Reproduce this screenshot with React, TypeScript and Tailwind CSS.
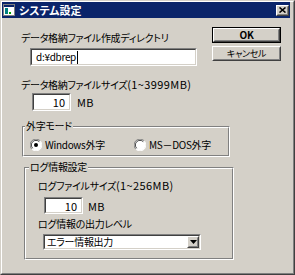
import React from "react";

const F = "[font-family:'Noto_Sans_CJK_JP',sans-serif] [font-feature-settings:'palt']";

function Sunken({ className, children }: { className?: string; children?: React.ReactNode }) {
  return (
    <div className={"border border-t-[#808080] border-l-[#808080] border-r-white border-b-white " + (className ?? "")}>
      <div className="h-full w-full border border-t-[#404040] border-l-[#404040] border-r-[#d4d0c8] border-b-[#d4d0c8] bg-white flex items-center">
        {children}
      </div>
    </div>
  );
}

function Raised({ className, children }: { className?: string; children?: React.ReactNode }) {
  return (
    <div className={"border border-t-white border-l-white border-r-[#404040] border-b-[#404040] " + (className ?? "")}>
      <div className="h-full w-full border border-t-[#d4d0c8] border-l-[#d4d0c8] border-r-[#808080] border-b-[#808080] flex items-center justify-center">
        {children}
      </div>
    </div>
  );
}

function Etched({ className, children }: { className?: string; children?: React.ReactNode }) {
  return (
    <div className={"relative border border-t-[#808080] border-l-[#808080] border-r-white border-b-white " + (className ?? "")}>
      <div className="h-full w-full border border-t-white border-l-white border-r-[#808080] border-b-[#808080]">
        {children}
      </div>
    </div>
  );
}

function Radio({ checked }: { checked?: boolean }) {
  return (
    <svg width="12" height="12" viewBox="0 0 12 12" className="shrink-0">
      <circle cx="6" cy="6" r="5.5" fill="white" />
      <path d="M10.2 1.8 A5.5 5.5 0 0 0 1.8 10.2" fill="none" stroke="#808080" strokeWidth="1" />
      <path d="M9.3 2.7 A4.3 4.3 0 0 0 2.7 9.3" fill="none" stroke="#404040" strokeWidth="1" />
      <path d="M1.8 10.2 A5.5 5.5 0 0 0 10.2 1.8" fill="none" stroke="#ffffff" strokeWidth="1" />
      {checked && <circle cx="6" cy="6" r="2" fill="black" />}
    </svg>
  );
}

export default function App() {
  return (
    <div className={"w-[295px] h-[275px] bg-[#d4d0c8] border border-t-[#d4d0c8] border-l-[#d4d0c8] border-r-[#404040] border-b-[#404040] text-[10px] tracking-[-0.3px] leading-[14px] text-black " + F}>
      <div className="h-full border border-t-white border-l-white border-r-[#808080] border-b-[#808080] pr-[3px]">
        {/* title bar */}
        <div className="h-[16px] bg-[#0a246a] flex items-center">
          <svg width="12" height="12" viewBox="0 0 12 12" className="ml-[1px] shrink-0">
            <rect x="0.5" y="0.5" width="11" height="11" fill="#ffffff" stroke="#808080" />
            <rect x="1" y="1" width="10" height="2" fill="#0a246a" />
            <rect x="2" y="4" width="3" height="6" fill="#008080" />
            <rect x="6" y="8" width="2" height="2" fill="#00a000" />
          </svg>
          <span className="ml-[4px] text-white font-bold text-[11px] tracking-[0px] leading-[16px]">システム設定</span>
          <Raised className="ml-auto mr-[1px] w-[13px] h-[11px] bg-[#d4d0c8]">
            <svg width="7" height="6" viewBox="0 0 7 6">
              <path d="M0.5 0.5 L6.5 5.5 M6.5 0.5 L0.5 5.5" stroke="black" strokeWidth="1.6" />
            </svg>
          </Raised>
        </div>

        {/* top section */}
        <div className="flex items-start">
          <div className="w-[210px] flex flex-col">
            <div className="mt-[13px] pl-[19px] whitespace-nowrap">データ格納ファイル作成ディレクトリ</div>
            <Sunken className="mt-[3px] ml-[28px] w-[167px] h-[18px]">
              <span className="pl-[4px] whitespace-nowrap">d:¥dbrep</span>
              <span className="ml-[1px] w-[1px] h-[13px] bg-black" />
            </Sunken>
          </div>
          <div className="mt-[9px] w-[69px] flex flex-col">
            <div className="border border-black h-[16px]">
              <Raised className="h-full">
                <span className="font-bold text-[10px] leading-none">OK</span>
              </Raised>
            </div>
            <Raised className="mt-[3px] h-[15px]">
              <span className="text-[9px] leading-none">キャンセル</span>
            </Raised>
          </div>
        </div>

        <div className="mt-[11px] pl-[19px] whitespace-nowrap">
          データ格納ファイルサイズ<span className="text-[11px] tracking-[0.4px]">(1~3999MB)</span>
        </div>
        <div className="mt-[1px] ml-[30px] flex items-center">
          <Sunken className="w-[39px] h-[18px]">
            <span className="ml-auto pr-[4px] text-[11px] tracking-[0px]">10</span>
          </Sunken>
          <span className="ml-[6px] text-[11px] tracking-[0.3px]">MB</span>
        </div>

        {/* group 1 */}
        <Etched className="mt-[15px] ml-[20px] w-[208px] h-[31px]">
          <span className="absolute left-[2px] -top-[8px] px-[1px] bg-[#d4d0c8] whitespace-nowrap">外字モード</span>
          <div className="pt-[10px] pl-[6px] flex items-center">
            <div className="w-[104px] flex items-center">
              <Radio checked />
              <span className="ml-[3px] whitespace-nowrap">Windows外字</span>
            </div>
            <div className="flex items-center">
              <Radio />
              <span className="ml-[3px] whitespace-nowrap">MS－DOS外字</span>
            </div>
          </div>
        </Etched>

        {/* group 2 */}
        <Etched className="mt-[10px] ml-[22px] w-[210px] h-[93px]">
          <span className="absolute left-[4px] -top-[8px] px-[1px] bg-[#d4d0c8] whitespace-nowrap">ログ情報設定</span>
          <div className="pt-[9px] pl-[12px] flex flex-col">
            <div className="whitespace-nowrap">
              ログファイルサイズ<span className="text-[11px] tracking-[0.4px]">(1~256MB)</span>
            </div>
            <div className="mt-[4px] ml-[6px] flex items-center">
              <Sunken className="w-[39px] h-[17px]">
                <span className="ml-auto pr-[4px] text-[11px] tracking-[0px]">10</span>
              </Sunken>
              <span className="ml-[5px] text-[11px] tracking-[0.3px]">MB</span>
            </div>
            <div className="mt-[3px] whitespace-nowrap">ログ情報の出力レベル</div>
            <Sunken className="mt-[3px] ml-[5px] w-[158px] h-[16px]">
              <span className="pl-[2px] whitespace-nowrap">エラー情報出力</span>
              <Raised className="ml-auto w-[12px] h-full bg-[#d4d0c8]">
                <svg width="7" height="4" viewBox="0 0 7 4">
                  <path d="M0 0 L7 0 L3.5 4 Z" fill="black" />
                </svg>
              </Raised>
            </Sunken>
          </div>
        </Etched>
      </div>
    </div>
  );
}
